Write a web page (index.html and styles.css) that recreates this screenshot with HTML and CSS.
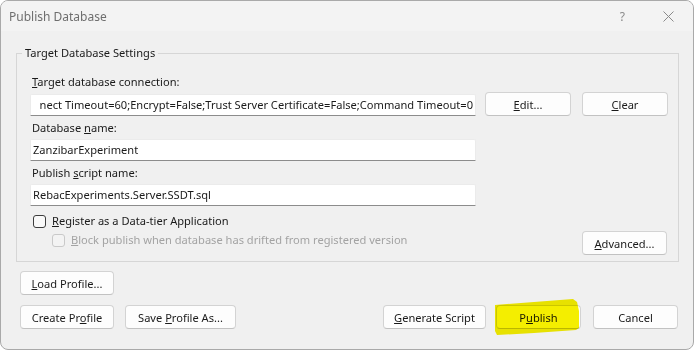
FILE: index.html
```html
<!DOCTYPE html>
<html lang="en">
<head>
  <meta charset="UTF-8" />
  <title>Publish Database</title>
  <link rel="stylesheet" href="styles.css">
</head>
<body>
  <div class="window">
    <div class="titlebar">
      <span class="title">Publish Database</span>
      <span class="help">?</span>
      <svg class="close" width="11" height="11" viewBox="0 0 11 11">
        <path d="M0.5 0.5 L10.5 10.5 M10.5 0.5 L0.5 10.5" stroke="#8a8a8a" stroke-width="1" fill="none" />
      </svg>
    </div>

    <div class="content">
      <fieldset class="group">
        <legend>Target Database Settings</legend>

        <div class="label"><u>T</u>arget database connection:</div>
        <div class="conn-row">
          <div class="textbox conn"><span>nect Timeout=60;Encrypt=False;Trust Server Certificate=False;Command Timeout=0</span></div>
          <button class="btn edit"><u>E</u>dit...</button>
          <button class="btn clear"><u>C</u>lear</button>
        </div>

        <div class="label">Database <u>n</u>ame:</div>
        <div class="textbox field">ZanzibarExperiment</div>

        <div class="label">Publish <u>s</u>cript name:</div>
        <div class="textbox field">RebacExperiments.Server.SSDT.sql</div>

        <div class="check-row">
          <span class="checkbox"></span>
          <span><u>R</u>egister as a Data-tier Application</span>
        </div>
        <div class="adv-row">
          <div class="check-row sub disabled">
            <span class="checkbox"></span>
            <span><u>B</u>lock publish when database has drifted from registered version</span>
          </div>
          <button class="btn advanced"><u>A</u>dvanced...</button>
        </div>
      </fieldset>

      <div class="profile-row">
        <button class="btn profile"><u>L</u>oad Profile...</button>
      </div>

      <div class="footer">
        <div class="footer-left">
          <button class="btn profile">Create Pr<u>o</u>file</button>
          <button class="btn save">Save <u>P</u>rofile As...</button>
        </div>
        <div class="footer-right">
          <button class="btn generate"><u>G</u>enerate Script</button>
          <div class="marked">
            <button class="btn">P<u>u</u>blish</button>
            <span class="highlighter"></span>
          </div>
          <button class="btn cancel">Cancel</button>
        </div>
      </div>
    </div>
  </div>
</body>
</html>
```

FILE: styles.css
```css
html, body {
  margin: 0;
  padding: 0;
  background: #ffffff;
}

body {
  font-family: 'Noto Sans', 'Open Sans', sans-serif;
  font-size: 11.1px;
  color: #1a1a1a;
}

.window {
  width: 694px;
  height: 350px;
  box-sizing: border-box;
  border: 1px solid #a9a9a9;
  border-radius: 8px;
  background: #f0f0f0;
  overflow: hidden;
  display: flex;
  flex-direction: column;
}

/* title bar */
.titlebar {
  height: 30px;
  background: #f3f3f3;
  display: flex;
  align-items: center;
  flex-shrink: 0;
}

.title {
  margin-left: 8px;
  font-size: 12px;
  color: #6e6e6e;
  flex: 1;
}

.help {
  font-size: 12px;
  color: #8a8a8a;
  margin-right: 38px;
}

.close {
  margin-right: 19px;
}

/* body */
.content {
  padding: 14px 14px 0 15px;
}

.group {
  margin: 0;
  padding: 13px 10px 6px 13px;
  border: 1px solid #d6d6d6;
  min-width: 0;
}

.group legend {
  margin-left: -8px;
  padding: 0 3px;
  line-height: 16px;
  color: #1a1a1a;
}

.label {
  line-height: 16px;
  margin: 4px 0 0 2px;
}

.group > .label:first-of-type {
  margin-top: 0;
}

.textbox {
  height: 22px;
  box-sizing: border-box;
  margin-top: 3px;
  padding: 0 2px;
  background: #ffffff;
  border: 1px solid #ebebeb;
  border-bottom-color: #8c8c8c;
  border-radius: 2px 2px 0 0;
  line-height: 20px;
  white-space: nowrap;
  overflow: hidden;
}

.field {
  width: 446px;
}

.conn-row {
  display: flex;
  align-items: flex-end;
  margin-top: 2px;
}

.conn-row .textbox {
  flex: 1;
  margin-top: 0;
  display: flex;
  justify-content: flex-end;
}

.label:last-of-type + .textbox {
  margin-top: 4px;
}

.btn {
  height: 24px;
  box-sizing: border-box;
  padding: 0;
  background: #fdfdfd;
  border: 1px solid #d3d3d3;
  border-bottom-color: #c2c2c2;
  border-radius: 4px;
  font-family: inherit;
  font-size: 11.1px;
  color: #1a1a1a;
  cursor: pointer;
}

.edit {
  width: 86px;
  margin-left: 9px;
}

.clear {
  width: 86px;
  margin-left: 11px;
}

/* checkboxes */
.check-row {
  display: flex;
  align-items: center;
  gap: 6px;
  line-height: 16px;
  margin: 7px 0 0 3px;
}

.checkbox {
  width: 13px;
  height: 13px;
  box-sizing: border-box;
  border: 1px solid #3d3d3d;
  border-radius: 3px;
  background: #f9f9f9;
}

.adv-row {
  display: flex;
  justify-content: space-between;
  align-items: flex-start;
  margin-top: 2px;
}

.check-row.sub {
  margin: 1px 0 0 22px;
}

.disabled {
  color: #a3a3a3;
}

.disabled .checkbox {
  border-color: #c9c9c9;
  background: #f3f3f3;
}

.advanced {
  width: 85px;
  margin-right: 1px;
}

/* bottom buttons */
.profile-row {
  margin: 9px 0 0 4px;
}

.profile {
  width: 94px;
}

.footer {
  display: flex;
  justify-content: space-between;
  margin: 10px 1px 0 4px;
}

.footer-left, .footer-right {
  display: flex;
}

.save {
  width: 111px;
  margin-left: 11px;
}

.generate {
  width: 103px;
}

.marked {
  position: relative;
  margin-left: 10px;
}

.marked .btn {
  width: 85px;
}

.highlighter {
  position: absolute;
  left: -2px;
  top: -7px;
  width: 86px;
  height: 38px;
  background: #f6f000;
  mix-blend-mode: multiply;
  clip-path: polygon(1px 7px, 40px 4px, 79px 1px, 83px 4px, 85px 13px, 85px 30px, 82px 32px, 40px 35px, 3px 37px, 1px 33px);
}

.cancel {
  width: 85px;
  margin-left: 12px;
}
```
